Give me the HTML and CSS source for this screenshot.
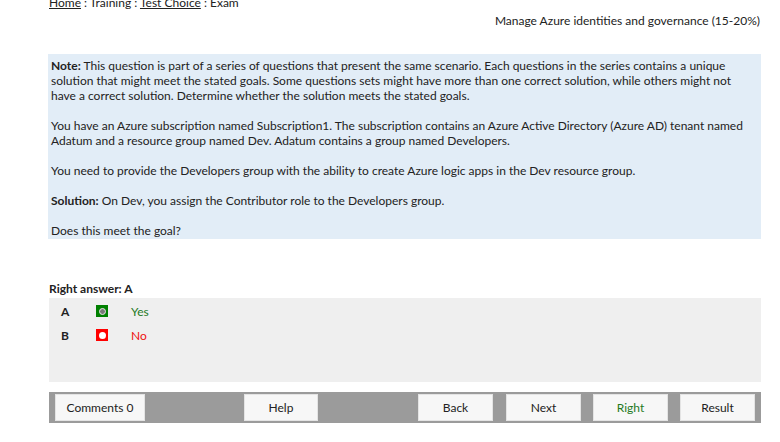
FILE: index.html
```html
<!DOCTYPE html>
<html>
<head>
<meta charset="utf-8">
<link rel="stylesheet" href="styles.css">
</head>
<body>
<div class="page">
  <div class="crumb"><a href="#">Home</a> : Training : <a href="#">Test Choice</a> : Exam</div>
  <div class="topic">Manage Azure identities and governance (15-20%)</div>
  <div class="question">
    <p><b>Note:</b> This question is part of a series of questions that present the same scenario. Each questions in the series contains a unique<br>solution that might meet the stated goals. Some questions sets might have more than one correct solution, while others might not<br>have a correct solution. Determine whether the solution meets the stated goals.</p>
    <p>You have an Azure subscription named Subscription1. The subscription contains an Azure Active Directory (Azure AD) tenant named<br>Adatum and a resource group named Dev. Adatum contains a group named Developers.</p>
    <p>You need to provide the Developers group with the ability to create Azure logic apps in the Dev resource group.</p>
    <p><b>Solution:</b> On Dev, you assign the Contributor role to the Developers group.</p>
    <p>Does this meet the goal?</p>
  </div>
  <div class="right-answer">Right answer: A</div>
  <div class="answers">
    <div class="row">
      <span class="letter">A</span>
      <span class="mark ok"><span class="dot"></span></span>
      <span class="txt yes">Yes</span>
    </div>
    <div class="row">
      <span class="letter">B</span>
      <span class="mark bad"><span class="dot"></span></span>
      <span class="txt no">No</span>
    </div>
  </div>
  <div class="bar">
    <button class="btn b-comments">Comments 0</button>
    <button class="btn b-help">Help</button>
    <button class="btn b-back">Back</button>
    <button class="btn b-next">Next</button>
    <button class="btn b-right">Right</button>
    <button class="btn b-result">Result</button>
  </div>
</div>
</body>
</html>
```
FILE: styles.css
```css
html, body {
  margin: 0;
  padding: 0;
  background: #ffffff;
}
body {
  font-family: Lato, "Open Sans", sans-serif;
  font-size: 12px;
  color: #222;
  overflow: hidden;
}
.page {
  width: 713px;
  margin-left: 48px;
}
.crumb {
  height: 15px;
  line-height: 15px;
  margin-top: -5px;
  padding-left: 1px;
  color: #222;
}
.crumb a {
  color: #222;
  text-decoration: underline;
}
.topic {
  margin-top: 3px;
  line-height: 15px;
  text-align: right;
  padding-right: 1px;
}
.question {
  margin-top: 26px;
  background: #e2edf7;
  padding: 4px 3px 1px 3px;
  line-height: 15px;
  white-space: nowrap;
}
.question p {
  margin: 0 0 15px 0;
}
.question p:last-child {
  margin-bottom: 0;
}
.right-answer {
  margin-top: 42px;
  line-height: 15px;
  font-weight: bold;
  padding-left: 1px;
}
.answers {
  margin-top: 2px;
  margin-left: 1px;
  height: 84px;
  background: #efefef;
  padding-top: 1px;
  box-sizing: border-box;
}
.row {
  display: flex;
  align-items: center;
  height: 24px;
}
.letter {
  width: 47px;
  padding-left: 12px;
  box-sizing: border-box;
  font-weight: bold;
}
.mark {
  width: 12px;
  height: 12px;
  display: flex;
  align-items: center;
  justify-content: center;
}
.mark.ok { background: #008000; }
.mark.bad { background: #ff0000; }
.dot {
  width: 7px;
  height: 7px;
  border-radius: 50%;
  background: #fff;
}
.mark.ok .dot {
  width: 5px;
  height: 5px;
  background: #7a7a7a;
  border: 1px solid #e6e6e6;
}
.txt {
  margin-left: 23px;
}
.txt.yes { color: #1f7a1f; }
.txt.no { color: #ee1111; }
.bar {
  margin-top: 10px;
  margin-left: 1px;
  height: 31px;
  background: #9b9b9b;
  display: flex;
  align-items: center;
}
.btn {
  height: 27px;
  background: #f7f7f7;
  border: 1px solid #e4e4e4;
  font-family: Lato, "Open Sans", sans-serif;
  font-size: 12px;
  color: #222;
  padding: 0;
  box-sizing: border-box;
}
.b-comments { width: 90px; margin-left: 6px; }
.b-help { width: 74px; margin-left: 99px; }
.b-back { width: 75px; margin-left: 100px; }
.b-next { width: 75px; margin-left: 13px; }
.b-right { width: 75px; margin-left: 12px; color: #1f7a1f; }
.b-result { width: 75px; margin-left: 12px; }
```
